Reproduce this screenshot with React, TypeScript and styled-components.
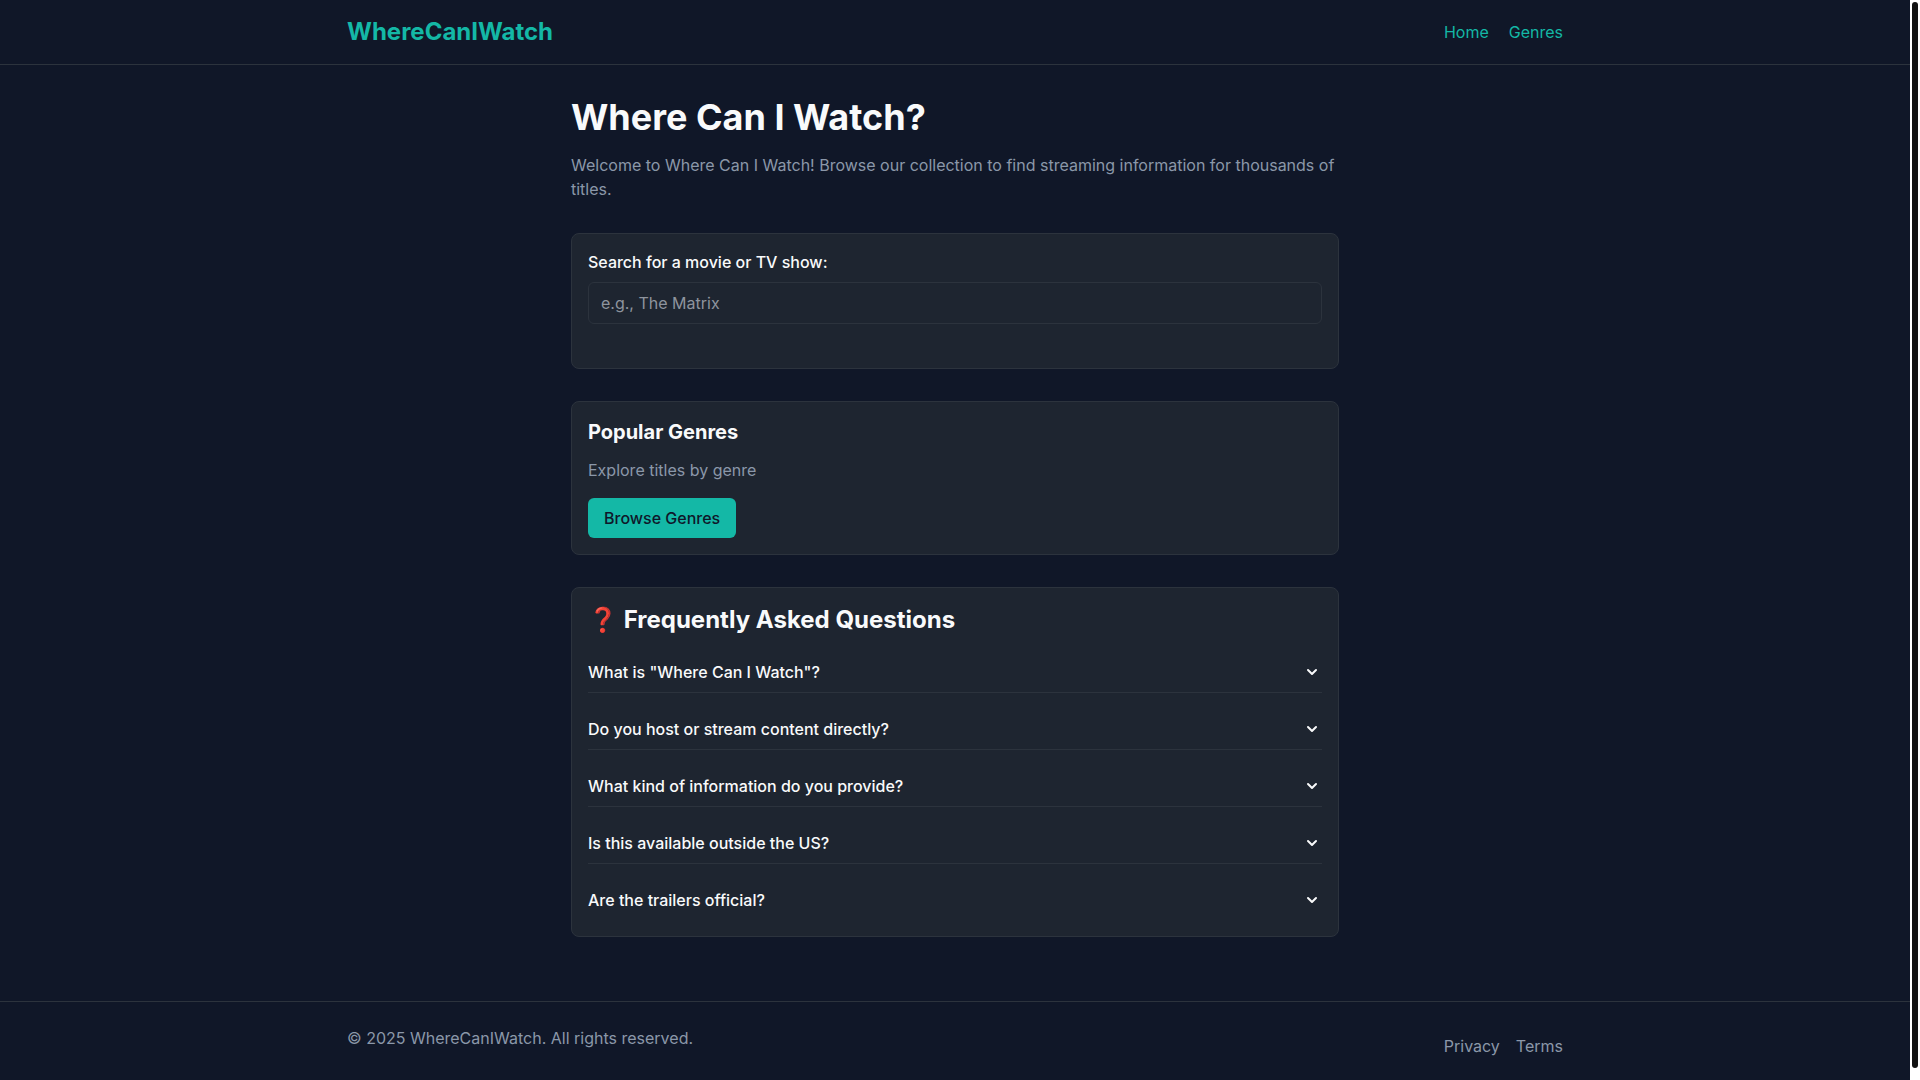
import React, { useState } from "react";
import styled, { createGlobalStyle } from "styled-components";

const color = {
  bg: "#101728",
  card: "#1e2530",
  line: "#2c333d",
  text: "#f9fafb",
  muted: "#8b97a9",
  teal: "#14b8a6",
  ink: "#0f172a",
};

const GlobalStyle = createGlobalStyle`
  *, *::before, *::after { box-sizing: border-box; }
  body {
    margin: 0;
    background: ${color.bg};
    color: ${color.text};
    font-family: Inter, "Open Sans", sans-serif;
    font-size: 16px;
    line-height: 24px;
  }
  h1, h2, p { margin: 0; }
  a { text-decoration: none; }
  button, input { font: inherit; }
`;

const Shell = styled.div`
  display: grid;
  grid-template-columns: minmax(0, 1fr) 10px;
  height: 100vh;
`;

const ScrollArea = styled.div`
  display: flex;
  flex-direction: column;
  min-height: 0;
  overflow-y: auto;
  scrollbar-width: none;
`;

const Track = styled.div`
  display: flex;
  flex-direction: column;
  padding: 2px 2px 12px;
  background: #ffffff;
`;

const Thumb = styled.div`
  flex: 1;
  border-radius: 3px;
  background: #111111;
`;

const Header = styled.header`
  flex: none;
  border-bottom: 1px solid ${color.line};
`;

const Footer = styled.footer`
  flex: none;
  margin-top: auto;
  padding: 24px 0;
  border-top: 1px solid ${color.line};
  color: ${color.muted};
`;

const Bar = styled.div<{ $pad: number }>`
  display: flex;
  justify-content: space-between;
  max-width: 1280px;
  margin: 0 auto;
  padding: ${(p) => p.$pad}px 32px;
`;

const Logo = styled.a`
  color: ${color.teal};
  font-size: 24px;
  font-weight: 700;
  line-height: 32px;
`;

const Links = styled.nav<{ $gap: number; $top: number }>`
  display: flex;
  align-items: center;
  gap: ${(p) => p.$gap}px;
  margin-top: ${(p) => p.$top}px;
`;

const TextLink = styled.a<{ $accent?: boolean }>`
  color: ${(p) => (p.$accent ? color.teal : color.muted)};
`;

const Main = styled.main`
  flex: none;
  width: 100%;
  max-width: 832px;
  margin: 0 auto;
  padding: 32px 32px 64px;
`;

const Title = styled.h1`
  margin-bottom: 16px;
  font-size: 36px;
  font-weight: 700;
  line-height: 40px;
`;

const Muted = styled.p`
  color: ${color.muted};
`;

const Card = styled.section`
  margin-top: 32px;
  padding: 16px;
  border: 1px solid ${color.line};
  border-radius: 8px;
  background: ${color.card};
`;

const SearchForm = styled.form`
  display: flex;
  flex-direction: column;
  gap: 8px;
  padding-bottom: 28px;
`;

const SearchLabel = styled.label`
  font-weight: 500;
`;

const SearchInput = styled.input`
  width: 100%;
  height: 42px;
  padding: 8px 12px;
  border: 1px solid ${color.line};
  border-radius: 6px;
  background: ${color.card};
  color: ${color.text};
  &::placeholder {
    color: #8e949e;
    opacity: 1;
  }
`;

const GenreStack = styled.div`
  display: flex;
  flex-direction: column;
  align-items: flex-start;
`;

const CardTitle = styled.h2`
  margin-bottom: 12px;
  font-size: 20px;
  font-weight: 700;
  line-height: 28px;
`;

const BrowseButton = styled.button`
  margin-top: 16px;
  padding: 8px 16px;
  border: 0;
  border-radius: 6px;
  background: ${color.teal};
  color: ${color.ink};
  font-weight: 500;
  cursor: pointer;
`;

const FaqTitle = styled.h2`
  margin-bottom: 16px;
  font-size: 24px;
  font-weight: 700;
  line-height: 32px;
`;

const FaqList = styled.div`
  display: flex;
  flex-direction: column;
  gap: 16px;
`;

const FaqItem = styled.div`
  border-bottom: 1px solid ${color.line};
  &:last-child {
    border-bottom: 0;
  }
`;

const Question = styled.button`
  display: flex;
  justify-content: space-between;
  align-items: center;
  width: 100%;
  padding: 8px 0;
  border: 0;
  background: none;
  color: ${color.text};
  font-weight: 500;
  text-align: left;
  cursor: pointer;
`;

const Chevron = styled.svg<{ $open: boolean }>`
  width: 20px;
  height: 20px;
  transform: ${(p) => (p.$open ? "rotate(180deg)" : "none")};
`;

const Answer = styled.p`
  padding-bottom: 8px;
  color: ${color.muted};
`;

const faqs = [
  {
    q: 'What is "Where Can I Watch"?',
    a: "A guide to where movies and TV shows are streaming.",
  },
  {
    q: "Do you host or stream content directly?",
    a: "No, we only link to the services that do.",
  },
  {
    q: "What kind of information do you provide?",
    a: "Streaming availability, genres and trailers.",
  },
  {
    q: "Is this available outside the US?",
    a: "Availability is listed for the US at the moment.",
  },
  {
    q: "Are the trailers official?",
    a: "Yes, trailers come from official channels.",
  },
];

function Faq({ q, a }: { q: string; a: string }) {
  const [open, setOpen] = useState(false);
  return (
    <FaqItem>
      <Question type="button" aria-expanded={open} onClick={() => setOpen(!open)}>
        {q}
        <Chevron $open={open} viewBox="0 0 20 20" fill="currentColor" aria-hidden="true">
          <path
            fillRule="evenodd"
            clipRule="evenodd"
            d="M5.293 7.293a1 1 0 011.414 0L10 10.586l3.293-3.293a1 1 0 111.414 1.414l-4 4a1 1 0 01-1.414 0l-4-4a1 1 0 010-1.414z"
          />
        </Chevron>
      </Question>
      {open && <Answer>{a}</Answer>}
    </FaqItem>
  );
}

export default function App() {
  return (
    <>
      <GlobalStyle />
      <Shell>
        <ScrollArea>
          <Header>
            <Bar $pad={16}>
              <Logo href="#">WhereCanIWatch</Logo>
              <Links $gap={20} $top={0} aria-label="Main">
                <TextLink $accent href="#">Home</TextLink>
                <TextLink $accent href="#genres">Genres</TextLink>
              </Links>
            </Bar>
          </Header>
          <Main>
            <Title>Where Can I Watch?</Title>
            <Muted>
              Welcome to Where Can I Watch! Browse our collection to find
              streaming information for thousands of titles.
            </Muted>
            <Card>
              <SearchForm onSubmit={(e) => e.preventDefault()}>
                <SearchLabel htmlFor="search">Search for a movie or TV show:</SearchLabel>
                <SearchInput id="search" type="text" placeholder="e.g., The Matrix" />
              </SearchForm>
            </Card>
            <Card id="genres">
              <GenreStack>
                <CardTitle>Popular Genres</CardTitle>
                <Muted>Explore titles by genre</Muted>
                <BrowseButton type="button">Browse Genres</BrowseButton>
              </GenreStack>
            </Card>
            <Card>
              <FaqTitle>❓ Frequently Asked Questions</FaqTitle>
              <FaqList>
                {faqs.map((f) => (
                  <Faq key={f.q} {...f} />
                ))}
              </FaqList>
            </Card>
          </Main>
          <Footer>
            <Bar $pad={0}>
              <p>© 2025 WhereCanIWatch. All rights reserved.</p>
              <Links $gap={16} $top={8} aria-label="Legal">
                <TextLink href="#privacy">Privacy</TextLink>
                <TextLink href="#terms">Terms</TextLink>
              </Links>
            </Bar>
          </Footer>
        </ScrollArea>
        <Track aria-hidden="true">
          <Thumb />
        </Track>
      </Shell>
    </>
  );
}
